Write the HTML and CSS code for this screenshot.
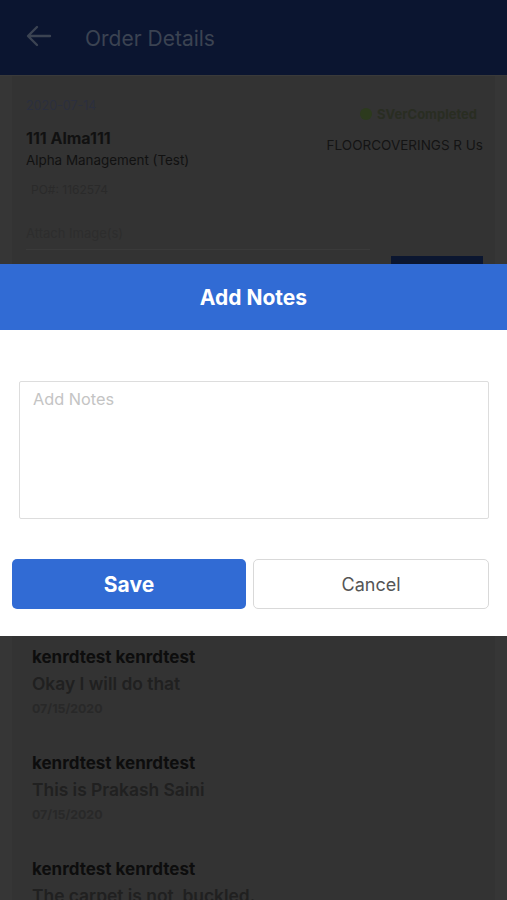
FILE: index.html
```html
<!DOCTYPE html>
<html lang="en">
<head>
    <meta charset="UTF-8">
    <meta name="viewport" content="width=device-width, initial-scale=1.0">
    <title>Order Details</title>
    <link rel="stylesheet" href="styles.css">
</head>
<body>
    <div class="page">
        <header class="topbar">
            <svg class="back" width="26" height="22" viewBox="0 0 26 22">
                <path d="M24 11H3M11 2L2 11l9 9" fill="none" stroke="currentColor" stroke-width="2.4" stroke-linecap="round" stroke-linejoin="round"/>
            </svg>
            <span class="topbar-title">Order Details</span>
        </header>

        <div class="card">
            <section class="details">
                <div class="details-top">
                    <div class="left">
                        <div class="order-date">2020-07-14</div>
                        <div class="order-name">111 Alma111</div>
                        <div class="order-company">Alpha Management (Test)</div>
                    </div>
                    <div class="right">
                        <div class="status"><span class="dot"></span>SVerCompleted</div>
                        <div class="vendor">FLOORCOVERINGS R Us</div>
                    </div>
                </div>
                <div class="po">PO#: 1162574</div>
                <div class="attach-label">Attach Image(s)</div>
                <div class="attach-row">
                    <div class="attach-input"></div>
                    <div class="attach-btn"></div>
                </div>
            </section>

            <section class="notes">
                <div class="note">
                    <div class="note-author">kenrdtest kenrdtest</div>
                    <div class="note-text">Okay I will do that</div>
                    <div class="note-date">07/15/2020</div>
                </div>
                <div class="note">
                    <div class="note-author">kenrdtest kenrdtest</div>
                    <div class="note-text">This is Prakash Saini</div>
                    <div class="note-date">07/15/2020</div>
                </div>
                <div class="note">
                    <div class="note-author">kenrdtest kenrdtest</div>
                    <div class="note-text">The carpet is not&nbsp; buckled.</div>
                    <div class="note-date">07/15/2020</div>
                </div>
            </section>
        </div>
    </div>

    <!-- popup ajout de note -->
    <div class="modal">
        <div class="modal-header">Add Notes</div>
        <div class="modal-body">
            <textarea class="notes-input" placeholder="Add Notes"></textarea>
            <div class="modal-actions">
                <button class="btn btn-save">Save</button>
                <button class="btn btn-cancel">Cancel</button>
            </div>
        </div>
    </div>
</body>
</html>
```

FILE: styles.css
```css
/* page en arriere plan (assombrie) */
body {
    font-family: Inter, "Liberation Sans", sans-serif;
    margin: 0;
    padding: 0;
    background: #363636;
    color: #111;
    overflow: hidden;
}

.topbar {
    height: 76px;
    background: #0b1530;
    display: flex;
    align-items: center;
    padding-left: 26px;
    color: #3b4352;
    box-sizing: border-box;
    border-bottom: 1px solid #3a3a3a;
}

.back {
    margin-top: -4px;
}

.topbar-title {
    font-size: 21px;
    margin-left: 33px;
    margin-top: 2px;
}

.card {
    background: #333;
    margin: 0 12px;
}

.details {
    padding: 22px 12px 0 14px;
}

.details-top {
    display: flex;
    justify-content: space-between;
}

.order-date {
    font-size: 12.5px;
    line-height: 16px;
    color: #2b2f3e;
}

.order-name {
    font-size: 16px;
    line-height: 22px;
    font-weight: 700;
    margin-top: 13px;
}

.order-company {
    font-size: 13.4px;
    line-height: 18px;
    margin-top: 2px;
}

.right {
    text-align: right;
}

.status {
    font-size: 13px;
    line-height: 16px;
    font-weight: 700;
    color: #292d22;
    margin-top: 8px;
    display: flex;
    align-items: center;
    justify-content: flex-end;
    padding-right: 6px;
}

.dot {
    width: 12px;
    height: 12px;
    border-radius: 50%;
    background: #2c3a1d;
    margin-right: 5px;
}

.vendor {
    font-size: 13.5px;
    line-height: 18px;
    margin-top: 14px;
    color: #141414;
}

.po {
    font-size: 12px;
    line-height: 16px;
    color: #2a2a2a;
    margin-top: 13px;
    padding-left: 5px;
}

.attach-label {
    font-size: 13px;
    line-height: 18px;
    color: #2d2d2d;
    margin-top: 26px;
}

.attach-row {
    display: flex;
    justify-content: space-between;
    margin-top: 7px;
    height: 50px;
}

.attach-input {
    width: 344px;
    border-top: 1px solid #3a3a3a;
}

.attach-btn {
    width: 92px;
    background: #0b1630;
    margin-top: 7px;
}

.notes {
    margin-top: 348px;
    padding-left: 20px;
}

.note {
    margin-bottom: 37px;
}

.note-author {
    font-size: 17px;
    line-height: 20px;
    font-weight: 700;
    color: #0d0d0d;
}

.note-text {
    font-size: 17.4px;
    line-height: 22px;
    font-weight: 600;
    color: #202020;
    margin-top: 6px;
}

.note-date {
    font-size: 12.4px;
    line-height: 14px;
    font-weight: 700;
    color: #282828;
    margin-top: 7px;
}

/* popup */
.modal {
    position: fixed;
    top: 264px;
    left: 0;
    right: 0;
    background: #fff;
}

.modal-header {
    height: 66px;
    background: #316bd4;
    color: #fff;
    font-size: 21px;
    font-weight: 700;
    display: flex;
    align-items: center;
    justify-content: center;
}

.modal-body {
    padding: 51px 18px 27px 12px;
}

.notes-input {
    display: block;
    box-sizing: border-box;
    width: 470px;
    height: 138px;
    margin-left: 7px;
    border: 1px solid #ddd;
    border-radius: 2px;
    padding: 7px 13px;
    font-family: Inter, "Liberation Sans", sans-serif;
    font-size: 16.3px;
    line-height: 20px;
    resize: none;
    outline: none;
}

.notes-input::placeholder {
    color: #c4c4c4;
}

.modal-actions {
    display: flex;
    gap: 7px;
    margin-top: 40px;
}

.btn {
    flex: 1;
    height: 50px;
    border-radius: 5px;
    font-family: Inter, "Liberation Sans", sans-serif;
    cursor: pointer;
}

.btn-save {
    background: #316bd4;
    border: none;
    color: #fff;
    font-size: 21px;
    font-weight: 700;
}

.btn-cancel {
    background: #fff;
    border: 1px solid #d9d9d9;
    color: #555;
    font-size: 18px;
}
```
